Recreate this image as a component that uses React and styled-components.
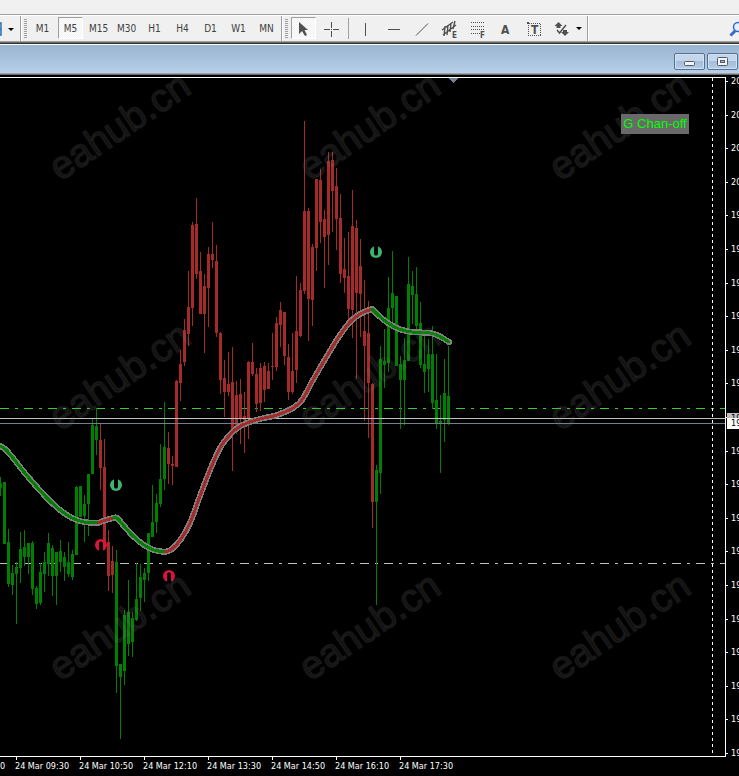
import styled, { createGlobalStyle, css } from "styled-components";

const FIRST_TIME_TICK = 16;
const CURRENT_PRICE_ROW = 10;

const timeframes = ["M1", "M5", "M15", "M30", "H1", "H4", "D1", "W1", "MN"];
const times = ["08:10", "09:30", "10:50", "12:10", "13:30", "14:50", "16:10", "17:30"];
const prices = Array.from({ length: 21 }, (_, index) => (index < 4 ? "20" : "19"));

// [high, body top, body bottom, low], one candle every 4px
const candles = [
 [477, 483, 488, 496], [482, 482, 544, 544], [529, 542, 584, 587], [565, 573, 585, 595], [562, 567, 574, 624],
 [532, 549, 568, 583], [530, 547, 557, 566], [543, 543, 557, 574], [541, 543, 589, 595], [586, 588, 604, 609],
 [563, 572, 603, 605], [552, 562, 574, 592], [533, 543, 564, 576], [545, 548, 576, 596], [552, 552, 576, 605],
 [540, 551, 562, 572], [552, 557, 567, 581], [542, 562, 574, 577], [550, 554, 577, 580], [486, 487, 555, 555],
 [486, 486, 517, 517], [495, 504, 516, 542], [474, 474, 504, 536], [419, 425, 474, 474], [408, 426, 440, 455],
 [423, 440, 468, 490], [439, 467, 545, 545], [530, 542, 576, 591], [546, 561, 575, 593], [550, 562, 666, 693],
 [664, 664, 677, 739], [610, 615, 671, 685], [580, 612, 644, 656], [612, 618, 642, 657], [563, 599, 620, 621],
 [564, 577, 598, 611], [568, 573, 580, 602], [533, 533, 573, 581], [485, 522, 537, 537], [494, 503, 522, 533],
 [444, 479, 504, 507], [402, 447, 479, 490], [432, 448, 464, 484], [456, 464, 466, 485], [380, 381, 467, 467],
 [350, 364, 383, 401], [319, 330, 362, 366], [271, 307, 334, 346], [222, 225, 308, 326], [198, 224, 274, 279],
 [252, 271, 314, 314], [274, 286, 314, 353], [247, 254, 288, 327], [222, 254, 260, 268], [245, 261, 333, 337],
 [332, 333, 380, 394], [360, 378, 392, 417], [352, 384, 392, 396], [347, 382, 430, 471], [381, 395, 427, 434],
 [379, 394, 419, 444], [392, 416, 420, 453], [361, 362, 419, 439], [343, 362, 374, 376], [368, 374, 404, 412],
 [363, 368, 403, 411], [362, 366, 390, 402], [363, 371, 389, 389], [333, 366, 367, 380], [317, 323, 367, 371],
 [302, 310, 325, 347], [312, 312, 356, 365], [344, 357, 392, 400], [333, 371, 392, 394], [276, 331, 370, 383],
 [283, 290, 336, 337], [121, 211, 291, 294], [208, 211, 299, 341], [244, 247, 300, 326], [179, 179, 248, 271],
 [169, 180, 222, 243], [210, 219, 237, 288], [152, 161, 235, 265], [152, 160, 191, 232], [168, 186, 219, 250],
 [194, 218, 274, 283], [238, 269, 278, 293], [232, 276, 309, 320], [190, 226, 310, 338], [220, 228, 293, 379],
 [239, 266, 294, 337], [280, 331, 346, 421], [301, 333, 383, 438], [383, 384, 502, 528], [465, 470, 502, 605],
 [346, 359, 473, 494], [329, 361, 365, 388], [277, 308, 363, 372], [251, 293, 308, 323], [296, 296, 366, 366],
 [356, 364, 380, 429], [338, 360, 380, 425], [257, 284, 361, 361], [271, 286, 295, 324], [267, 294, 326, 330],
 [302, 323, 365, 368], [333, 364, 372, 393], [339, 354, 369, 392], [326, 354, 403, 409], [354, 400, 424, 429],
 [395, 421, 424, 473], [359, 393, 420, 442], [346, 396, 424, 425],
];

const candleColor = (index) => ((index >= 25 && index <= 28) || (index >= 42 && index <= 93) ? "#a52a2a" : "#008000");

// Moving average, split where the trend turns
const averageParts = [
 { color: "#008000", points: [[-2, 445], [5, 449], [13, 458], [24, 472], [36, 486], [48, 499], [60, 510], [72, 518], [84, 522], [98, 523]] },
 { color: "#a52a2a", points: [[98, 523], [106, 520], [113, 518]] },
 { color: "#008000", points: [[113, 518], [117, 518], [124, 526], [133, 536], [144, 545], [154, 550], [165, 552]] },
 { color: "#a52a2a", points: [[165, 552], [172, 549], [181, 539], [190, 523], [200, 496], [210, 470], [220, 448], [228, 437], [236, 429], [247, 423], [260, 419], [277, 415], [293, 408], [302, 400], [313, 380], [327, 356], [338, 338], [350, 322], [360, 314], [372, 309]] },
 { color: "#008000", points: [[372, 309], [378, 315], [388, 323], [399, 329], [412, 332], [430, 333], [439, 336], [449, 342]] },
];

const smoothPath = (points) =>
 points.reduce((path, point, i) => {
  if (i === 0) return `M${point[0]} ${point[1]}`;
  const before = points[i - 2] || points[i - 1];
  const start = points[i - 1];
  const after = points[i + 1] || point;
  const c1 = [start[0] + (point[0] - before[0]) / 6, start[1] + (point[1] - before[1]) / 6];
  const c2 = [point[0] - (after[0] - start[0]) / 6, point[1] - (after[1] - start[1]) / 6];
  return `${path} C${c1} ${c2} ${point}`;
 }, "");

const signals = [
 { x: 116, y: 485, down: true },
 { x: 376, y: 252, down: true },
 { x: 101, y: 545, down: false },
 { x: 169, y: 576, down: false },
];

const Signal = ({ x, y, down }) => (
 <g transform={`translate(${x} ${y}) scale(1 ${down ? 1 : -1})`}>
  <circle r="6" fill={down ? "#3cb371" : "#dc143c"} />
  <path d="M-2 -6.5H2V2L1 3.5H-1L-2 2Z" fill="#000" />
 </g>
);

const Watermarks = () =>
 [127, 377, 627].map((y) =>
  [120, 370, 620].map((x) => (
   <Watermark key={`${x}-${y}`} transform={`translate(${x} ${y}) rotate(-34)`} x="0" y="12">
    eahub.cn
   </Watermark>
  ))
 );

const Chart = () => (
 <Plot role="img" aria-label="Price chart">
  <g transform="translate(0 -78)">
   <g shapeRendering="crispEdges">
    <line x1="0" x2="100%" y1="408.5" y2="408.5" stroke="#32cd32" strokeDasharray="9 6 3 6" />
    <line x1="0" x2="100%" y1="563.5" y2="563.5" stroke="#c0c0c0" strokeDasharray="9 6 3 6" />
    <line x1="712.5" x2="712.5" y1="78" y2="756" stroke="#fff" strokeDasharray="3 3" />
    {candles.map(([high, top, bottom, low], index) => (
     <g key={index} fill={candleColor(index)}>
      <rect x={index * 4} y={high} width="1" height={low - high} />
      <rect x={index * 4 - 1} y={top} width="3" height={bottom - top} />
     </g>
    ))}
    <line x1="0" x2="100%" y1="418.5" y2="418.5" stroke="#c0c0c0" />
    <line x1="0" x2="100%" y1="423.5" y2="423.5" stroke="#708090" />
    <path d="M449 78H458L453.5 83Z" fill="#708090" />
   </g>
   <g fill="none" strokeLinecap="round" strokeLinejoin="round" shapeRendering="crispEdges">
    {averageParts.map(({ points }, index) => (
     <path key={index} d={smoothPath(points)} stroke="#808080" strokeWidth="6" />
    ))}
    {averageParts.map(({ color, points }, index) => (
     <path key={index} d={smoothPath(points)} stroke={color} strokeWidth="3" />
    ))}
   </g>
   {signals.map((signal) => (
    <Signal key={signal.x} {...signal} />
   ))}
   <Watermarks />
  </g>
 </Plot>
);

const Icon = styled.svg.attrs({ width: 23, height: 20, fill: "none", stroke: "#505050", shapeRendering: "crispEdges" })`
 flex: none;
 overflow: visible;
`;

const IconText = styled.text`
 fill: #505050;
 stroke: none;
 font-size: ${({ $size }) => $size}px;
 font-weight: bold;
`;

const drawingTools = [
 {
  name: "Vertical line",
  icon: <path d="M11.5 5V18" />,
 },
 {
  name: "Horizontal line",
  icon: <path d="M6 11.5H18" />,
 },
 {
  name: "Trendline",
  icon: <path d="M6 17.5L18 5.5" shapeRendering="auto" />,
 },
 {
  name: "Equidistant channel",
  icon: (
   <>
    <path d="M4 12L15 4M5 17L18 7M7 8L6 18M10 7L9 17M13 5L12 14M17 3L15 11" shapeRendering="auto" strokeWidth="1.4" />
    <IconText x="14" y="20" $size={8}>E</IconText>
   </>
  ),
 },
 {
  name: "Fibonacci retracement",
  icon: (
   <>
    <path d="M5 4.5H19M5 8.5H19M5 11.5H19M5 15.5H14" strokeDasharray="1 1" />
    <IconText x="14" y="20" $size={8}>F</IconText>
   </>
  ),
 },
 {
  name: "Text",
  icon: <IconText x="7" y="16" $size={12}>A</IconText>,
 },
 {
  name: "Text label",
  icon: (
   <>
    <path d="M6.5 5.5H18.5V17.5H6.5Z" strokeDasharray="1 1" />
    <path d="M5 4H7V6H5Z" fill="#505050" stroke="none" />
    <IconText x="9" y="16" $size={12}>T</IconText>
   </>
  ),
 },
];

export default function App() {
 return (
  <Page>
   <GlobalStyle />
   <MenuStrip />

   <Toolbar>
    <ToolGroup>
     <ProfileButton aria-label="Profiles">
      <svg width="2" height="14"><path d="M0 1H1V13H0M0 7H1" fill="none" stroke="#2b6cb0" strokeWidth="1.5" /></svg>
      <Caret />
     </ProfileButton>
    </ToolGroup>

    <ToolGroup>
     <Grip />
     {timeframes.map((timeframe) => (
      <TimeframeButton key={timeframe} $pressed={timeframe === "M5"}>{timeframe}</TimeframeButton>
     ))}
    </ToolGroup>

    <ToolGroup>
     <Grip />
     <ToolButton aria-label="Cursor" $pressed>
      <Icon><path d="M7 4V16L10 13L13 18L15 17L12.5 12H16Z" fill="#505050" stroke="none" shapeRendering="auto" /></Icon>
     </ToolButton>
     <ToolButton aria-label="Crosshair">
      <Icon><path d="M4 11.5H10M13 11.5H19M11.5 4V10M11.5 13V19M11 11.5H12" /></Icon>
     </ToolButton>
     <Divider />
     {drawingTools.map(({ name, icon }) => (
      <ToolButton key={name} aria-label={name}>
       <Icon>{icon}</Icon>
      </ToolButton>
     ))}
     <ToolButton aria-label="Arrows" $wide>
      <Icon>
       <g fill="#505050" stroke="none" shapeRendering="auto">
        <path d="M8.5 4L12.5 8H10.5V10H6.5V8H4.5Z" />
        <path d="M15 18L11 14H13V12H17V14H19Z" />
       </g>
       <path d="M7 12L9.5 15L16 7" shapeRendering="auto" strokeWidth="1.5" />
      </Icon>
      <Caret />
     </ToolButton>
    </ToolGroup>

    <SearchButton aria-label="Search">
     <svg width="18" height="16" fill="none">
      <path d="M1.5 14.5L6 10" stroke="#2f6bd0" strokeWidth="3" />
      <circle cx="9" cy="6" r="4.5" stroke="#2f6bd0" strokeWidth="1.5" fill="#e8f0fb" />
     </svg>
    </SearchButton>
   </Toolbar>

   <TitleBar>
    <WindowButton aria-label="Minimize" $low>
     <svg width="11" height="5"><rect x="0.5" y="0.5" width="10" height="4" rx="1" fill="#f4f4f4" stroke="#4f5a6b" /></svg>
    </WindowButton>
    <WindowButton aria-label="Maximize">
     <svg width="11" height="9">
      <rect x="0.5" y="0.5" width="10" height="8" rx="1" fill="#f4f4f4" stroke="#4f5a6b" />
      <rect x="3.5" y="3.5" width="4" height="2" fill="#9db6d3" stroke="#4f5a6b" />
     </svg>
    </WindowButton>
   </TitleBar>

   <ChartWindow>
    <PlotColumn>
     <PlotFrame>
      <Chart />
      <ChannelButton>G Chan-off</ChannelButton>
     </PlotFrame>
     <TimeAxis>
      {times.map((time) => (
       <TimeLabel key={time}>24 Mar {time}</TimeLabel>
      ))}
     </TimeAxis>
    </PlotColumn>

    <PriceAxis>
     {prices.map((price, index) => (
      <PriceLabel key={index}>{index !== CURRENT_PRICE_ROW && price}</PriceLabel>
     ))}
     <PriceTag $top={338} $height={5} $color="#c0c0c0">19</PriceTag>
     <PriceTag $top={343} $height={11} $color="#ffffff">19</PriceTag>
    </PriceAxis>
   </ChartWindow>
  </Page>
 );
}

const uiFont = `"DejaVu Sans Condensed", "DejaVu Sans", sans-serif`;

const GlobalStyle = createGlobalStyle`
 * {
  box-sizing: border-box;
 }

 body {
  margin: 0;
  background: #000;
  font-family: ${uiFont};
 }

 button {
  padding: 0;
  border: 0;
  background: none;
  font-family: inherit;
 }

 svg {
  display: block;
 }
`;

const Page = styled.div`
 display: flex;
 flex-direction: column;
 min-height: 100vh;
 overflow: hidden;
`;

const MenuStrip = styled.div`
 height: 14px;
 background: #f0f0f0;
`;

const Toolbar = styled.div`
 display: flex;
 height: 30px;
 border-top: 1px solid #a0a0a0;
 border-bottom: 1px solid #303030;
 background: #f0f0f0;
 box-shadow: inset 0 1px #fff, inset 0 -1px #696969, inset 0 -2px #a0a0a0;
 overflow: hidden;
`;

const ToolGroup = styled.div`
 display: flex;
 flex: none;
 align-items: flex-start;
 height: 25px;
 margin-top: 1px;
 padding: 1px 1px 0 2px;
 border-right: 1px solid #a0a0a0;
 box-shadow: 1px 0 #fff;

 & + & {
  margin-left: 1px;
 }

 &:first-child {
  padding: 1px 0 0;
 }
`;

const Grip = styled.span`
 width: 3px;
 height: 20px;
 margin: 2px 1px 0 0;
 background: repeating-linear-gradient(#a0a0a0 0 1px, #f0f0f0 1px 2px);
`;

const pressedStyle = css`
 border-color: #a0a0a0 #fff #fff #a0a0a0;
 background: repeating-conic-gradient(#fff 0 25%, #f0f0f0 0 50%) 0 0 / 2px 2px;
`;

const ToolButton = styled.button`
 display: flex;
 align-items: center;
 justify-content: ${({ $wide }) => ($wide ? "flex-start" : "center")};
 gap: 3px;
 width: ${({ $wide }) => ($wide ? 36 : 25)}px;
 height: 22px;
 margin: 0 1px 0 2px;
 border: 1px solid transparent;
 ${({ $pressed }) => $pressed && pressedStyle}
`;

const TimeframeButton = styled(ToolButton)`
 padding-top: 2px;
 color: #404040;
 font-size: 10px;
 line-height: 18px;
`;

const Caret = styled.span`
 border: 3px solid transparent;
 border-top-color: #000;
 border-bottom: 0;
`;

const ProfileButton = styled.button`
 display: flex;
 align-items: center;
 gap: 6px;
 width: 20px;
 height: 24px;
`;

const Divider = styled.span`
 width: 1px;
 height: 21px;
 margin: 1px 2px 0 3px;
 background: #a0a0a0;
`;

const SearchButton = styled.button`
 flex: none;
 align-self: center;
 margin: 0 -8px 0 auto;
`;

const TitleBar = styled.div`
 display: flex;
 align-items: center;
 justify-content: flex-end;
 gap: 2px;
 height: 31px;
 padding: 4px 1px 0 0;
 border-top: 1px solid #fff;
 border-bottom: 1px solid #696969;
 background: linear-gradient(#99b4d1, #b9d1ea);
 box-shadow: inset 0 -1px #a0a0a0;
`;

const WindowButton = styled.button`
 display: flex;
 align-items: ${({ $low }) => ($low ? "flex-end" : "center")};
 justify-content: center;
 width: 31px;
 height: 17px;
 padding-bottom: ${({ $low }) => ($low ? 3 : 0)}px;
 border: 1px solid #56708f;
 border-radius: 2px;
 background: linear-gradient(#c3d6eb 50%, #a3bddb 50%, #b4cce6);
 box-shadow: inset 0 0 0 1px #d3e2f2;
`;

const ChartWindow = styled.main`
 display: grid;
 grid-template-columns: minmax(0, 1fr) 13px;
 flex: 1;
 background: #000;
 color: #fff;
 font-size: 9px;
`;

const PlotColumn = styled.div`
 padding-top: 2px;
`;

const PlotFrame = styled.div`
 position: relative;
 border: 1px solid #fff;
 border-left: 0;
`;

const Plot = styled.svg`
 width: 100%;
 height: 678px;
`;

const Watermark = styled.text`
 fill: rgba(128, 128, 128, 0.12);
 stroke: rgba(128, 128, 128, 0.12);
 stroke-width: 2px;
 font-family: "Liberation Sans", Arial, sans-serif;
 font-size: 39px;
 text-anchor: middle;
`;

const ChannelButton = styled.button`
 position: absolute;
 top: 36px;
 right: 36px;
 width: 68px;
 height: 20px;
 background: #696969;
 color: #00ff00;
 font-family: "Liberation Sans", Arial, sans-serif;
 font-size: 13px;
 line-height: 20px;
 white-space: nowrap;
`;

const TimeAxis = styled.div`
 display: flex;
 height: 19px;
 padding-left: ${FIRST_TIME_TICK - 1}px;
 overflow: hidden;
`;

const TimeLabel = styled.span`
 position: relative;
 flex: 0 0 64px;
 padding-top: 3px;
 line-height: 12px;
 white-space: nowrap;

 &:first-child {
  margin-left: -64px;
 }

 &::before {
  content: "";
  position: absolute;
  top: 0;
  left: 1px;
  width: 1px;
  height: 3px;
  background: #fff;
 }
`;

const PriceAxis = styled.div`
 position: relative;
 display: flex;
 flex-direction: column;
 justify-content: space-between;
 height: 685px;
 overflow: hidden;
`;

const PriceLabel = styled.span`
 display: flex;
 align-items: center;
 gap: 3px;
 height: 13px;
 line-height: 13px;

 &::before {
  content: "";
  flex: none;
  width: 2px;
  height: 1px;
  background: #fff;
 }
`;

const PriceTag = styled.span`
 position: absolute;
 top: ${({ $top }) => $top}px;
 left: 1px;
 width: 100%;
 height: ${({ $height }) => $height}px;
 padding-left: 4px;
 background: ${({ $color }) => $color};
 color: #000;
 line-height: 11px;
 overflow: hidden;
`;
